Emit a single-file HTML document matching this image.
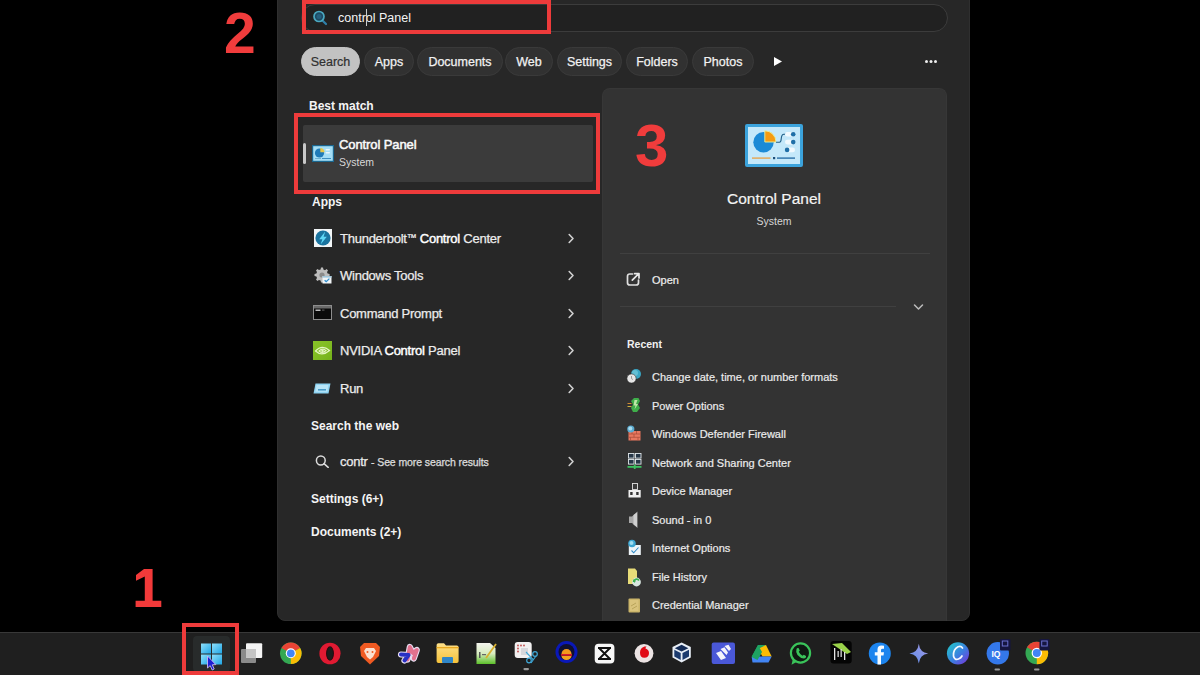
<!DOCTYPE html>
<html><head><meta charset="utf-8">
<style>
*{margin:0;padding:0;box-sizing:border-box}
html,body{width:1200px;height:675px;overflow:hidden;background:#000;font-family:"Liberation Sans",sans-serif;color:#f2f2f2}
.a{position:absolute}
.panel{position:absolute;left:277px;top:-12px;width:693px;height:633px;background:#272727;border-radius:8px;border:1px solid #2f2f2f}
.search{position:absolute;left:301px;top:4px;width:647px;height:28px;border-radius:14px;background:#212121;border:1px solid #3c3c3c}
.redbox{position:absolute;border:4px solid #ee3b3b}
.chip{position:absolute;top:47px;height:29px;border-radius:15px;background:#313131;border:1px solid #3a3a3a;font-size:12.5px;line-height:28px;text-align:center;color:#f2f2f2;-webkit-text-stroke:0.25px #f2f2f2}
.hdr{position:absolute;font-size:12px;font-weight:bold;color:#f4f4f4;white-space:nowrap}
.row{position:absolute;font-size:13px;color:#ececec;white-space:nowrap;letter-spacing:-0.25px;-webkit-text-stroke:0.25px #ececec}
.row b{font-weight:normal;-webkit-text-stroke:0.45px #fff;color:#fff}
.tm{font-size:10px;vertical-align:2px}
.chev{position:absolute;width:8px;height:11px}
.rp{position:absolute;left:602px;top:88px;width:345px;height:533px;background:#333333;border:1px solid #373737;border-bottom:none;border-radius:8px 8px 0 0}
.rec{position:absolute;left:652px;font-size:11px;color:#ebebeb;white-space:nowrap;-webkit-text-stroke:0.2px #ebebeb}
.num{position:absolute;font-weight:bold;color:#f03c3c;font-size:54px;line-height:1}
.tb{position:absolute;left:0;top:632px;width:1200px;height:43px;background:#1f1f1f;border-top:1px solid #383838}
.ti{position:absolute;top:643px;width:22px;height:22px}
</style></head>
<body>
<div class="panel"></div>
<div class="search"></div>
<!-- search icon -->
<svg class="a" style="left:311px;top:9px" width="18" height="18" viewBox="0 0 18 18"><line x1="11.2" y1="11.2" x2="15" y2="15" stroke="#2f7fa8" stroke-width="2.2" stroke-linecap="round"/><circle cx="8" cy="7.5" r="5" fill="#1d4a63" stroke="#4aa8c0" stroke-width="1.7"/><circle cx="8" cy="7.5" r="2.5" fill="#2a6a8a" opacity="0.7"/></svg>
<div class="a" style="left:338px;top:11px;font-size:12.5px;color:#f4f4f4;white-space:nowrap">control Panel</div>
<div class="a" style="left:366px;top:9px;width:1px;height:17px;background:#ccc"></div>
<div class="redbox" style="left:302px;top:0;width:249px;height:34px"></div>

<!-- chips -->
<div class="chip" style="left:301px;width:59px;background:#c2c2c2;border-color:#c2c2c2;color:#303030;-webkit-text-stroke:0.2px #303030">Search</div>
<div class="chip" style="left:364px;width:50px">Apps</div>
<div class="chip" style="left:417px;width:86px">Documents</div>
<div class="chip" style="left:505px;width:48px">Web</div>
<div class="chip" style="left:557px;width:65px">Settings</div>
<div class="chip" style="left:626px;width:62px">Folders</div>
<div class="chip" style="left:692px;width:62px">Photos</div>
<svg class="a" style="left:772px;top:56px" width="11" height="11" viewBox="0 0 11 11"><path d="M2 1 L10 5.5 L2 10 Z" fill="#fff"/></svg>
<svg class="a" style="left:920px;top:55px" width="22" height="12" viewBox="920 55 22 12"><circle cx="926.5" cy="61.5" r="1.5" fill="#eee"/><circle cx="931" cy="61.5" r="1.5" fill="#eee"/><circle cx="935.5" cy="61.5" r="1.5" fill="#eee"/></svg>

<!-- left column -->
<div class="hdr" style="left:309px;top:99px">Best match</div>
<div class="a" style="left:303px;top:125px;width:290px;height:57px;background:#3b3b3b;border-radius:2px"></div>
<div class="a" style="left:303px;top:143px;width:3px;height:21px;background:#c8c8c8;border-radius:2px"></div>
<div class="a" style="left:339px;top:136.5px;font-size:13px;color:#fafafa;white-space:nowrap;-webkit-text-stroke:0.5px #fafafa;letter-spacing:-0.1px">Control Panel</div>
<div class="a" style="left:339px;top:156px;font-size:10.5px;color:#d8d8d8;white-space:nowrap">System</div>
<div class="redbox" style="left:294px;top:113px;width:306px;height:81px"></div>

<div class="hdr" style="left:312px;top:195px">Apps</div>
<div class="row" style="left:340px;top:231px">Thunderbolt<span class="tm">™</span> <b>Control</b> Center</div>
<div class="row" style="left:340px;top:268px">Windows Tools</div>
<div class="row" style="left:340px;top:306px">Command Prompt</div>
<div class="row" style="left:340px;top:343px">NVIDIA <b>Control</b> Panel</div>
<div class="row" style="left:340px;top:381px">Run</div>
<svg class="chev" style="left:567px;top:233px" viewBox="0 0 8 11"><path d="M2.2 1.5 L6 5.5 L2.2 9.5" fill="none" stroke="#d0d0d0" stroke-width="1.6" stroke-linecap="round" stroke-linejoin="round"/></svg>
<svg class="chev" style="left:567px;top:270px" viewBox="0 0 8 11"><path d="M2.2 1.5 L6 5.5 L2.2 9.5" fill="none" stroke="#d0d0d0" stroke-width="1.6" stroke-linecap="round" stroke-linejoin="round"/></svg>
<svg class="chev" style="left:567px;top:308px" viewBox="0 0 8 11"><path d="M2.2 1.5 L6 5.5 L2.2 9.5" fill="none" stroke="#d0d0d0" stroke-width="1.6" stroke-linecap="round" stroke-linejoin="round"/></svg>
<svg class="chev" style="left:567px;top:345px" viewBox="0 0 8 11"><path d="M2.2 1.5 L6 5.5 L2.2 9.5" fill="none" stroke="#d0d0d0" stroke-width="1.6" stroke-linecap="round" stroke-linejoin="round"/></svg>
<svg class="chev" style="left:567px;top:383px" viewBox="0 0 8 11"><path d="M2.2 1.5 L6 5.5 L2.2 9.5" fill="none" stroke="#d0d0d0" stroke-width="1.6" stroke-linecap="round" stroke-linejoin="round"/></svg>

<div class="hdr" style="left:311px;top:418.5px">Search the web</div>
<div class="row" style="left:340px;top:454px">contr <span style="font-size:10.5px;color:#cfcfcf;letter-spacing:-0.1px">- See more search results</span></div>
<svg class="chev" style="left:567px;top:456px" viewBox="0 0 8 11"><path d="M2.2 1.5 L6 5.5 L2.2 9.5" fill="none" stroke="#d0d0d0" stroke-width="1.6" stroke-linecap="round" stroke-linejoin="round"/></svg>
<div class="hdr" style="left:311px;top:491.5px">Settings (6+)</div>
<div class="hdr" style="left:311px;top:525px">Documents (2+)</div>

<!-- right panel -->
<div class="rp"></div>
<div class="a" style="left:602px;top:190px;width:344px;text-align:center;font-size:15.5px;color:#f4f4f4;-webkit-text-stroke:0.2px #f4f4f4">Control Panel</div>
<div class="a" style="left:602px;top:215px;width:344px;text-align:center;font-size:10.5px;color:#d6d6d6">System</div>
<div class="a" style="left:620px;top:253px;width:310px;height:1px;background:#404040"></div>
<div class="a" style="left:652px;top:274px;font-size:11px;color:#eee;-webkit-text-stroke:0.2px #eee">Open</div>
<div class="a" style="left:620px;top:306px;width:276px;height:1px;background:#404040"></div>
<div class="a" style="left:627px;top:338px;font-size:10.5px;font-weight:bold;color:#f0f0f0">Recent</div>
<div class="rec" style="top:371px">Change date, time, or number formats</div>
<div class="rec" style="top:400px">Power Options</div>
<div class="rec" style="top:428px">Windows Defender Firewall</div>
<div class="rec" style="top:457px">Network and Sharing Center</div>
<div class="rec" style="top:485px">Device Manager</div>
<div class="rec" style="top:514px">Sound - in 0</div>
<div class="rec" style="top:542px">Internet Options</div>
<div class="rec" style="top:571px">File History</div>
<div class="rec" style="top:599px">Credential Manager</div>


<!-- left icons -->
<svg class="a" style="left:312px;top:145px" width="22" height="17" viewBox="0 0 22 17">
<rect x="0" y="0" width="22" height="17" fill="#1a6790"/>
<rect x="1.2" y="1.2" width="19.6" height="14.6" fill="#a4def6"/>
<circle cx="7.5" cy="8" r="4.6" fill="#1f7bb8"/>
<path d="M8.3 3 A4.6 4.6 0 0 1 12.6 7.2 L8.3 7.2Z" fill="#e6c84a"/>
<rect x="13.5" y="4" width="4.5" height="1.6" rx="0.8" fill="#e8f6fc"/>
<rect x="13.5" y="7" width="4.5" height="1.6" rx="0.8" fill="#e8f6fc"/>
<rect x="3" y="13" width="6" height="1" fill="#6cb0d0"/><rect x="10" y="13" width="9" height="1" fill="#3d8fc0"/>
</svg>
<svg class="a" style="left:314px;top:229px" width="18" height="18" viewBox="0 0 18 18">
<rect width="18" height="18" fill="#f2f6f8"/>
<circle cx="9" cy="9" r="7.6" fill="#1a74a0"/>
<path d="M11.2 2.6 L5.2 10.2 L8.4 10.2 L6.6 15.6 L12.8 7.8 L9.6 7.8 Z" fill="#5fd8f6"/>
</svg>
<svg class="a" style="left:314px;top:267px" width="18" height="17" viewBox="0 0 18 17">
<path d="M7 0.5 L9 0.5 L9.4 2.4 L11 3.2 L12.6 2 L14 3.4 L13 5 L13.6 6.6 L15.6 7 L15.6 9 L13.6 9.4 L13 11 L14 12.6 L12.6 14 L11 13 L9.4 13.6 L9 15.6 L7 15.6 L6.6 13.6 L5 13 L3.4 14 L2 12.6 L3 11 L2.4 9.4 L0.5 9 L0.5 7 L2.4 6.6 L3 5 L2 3.4 L3.4 2 L5 3 L6.6 2.4 Z" fill="#bdbdbd"/>
<circle cx="8" cy="8" r="2.6" fill="#8a8a8a"/>
<rect x="8.5" y="9" width="9" height="7.5" fill="#f0f4f6"/>
<rect x="8.5" y="9" width="9" height="1.6" fill="#9fc6dc"/>
<path d="M10.6 13.2 L12.2 14.6 L15.4 11.6" stroke="#2f8fd0" stroke-width="1.3" fill="none"/>
</svg>
<svg class="a" style="left:313px;top:305px" width="19" height="15" viewBox="0 0 19 15">
<rect x="0.5" y="0.5" width="18" height="14" fill="#0a0a0a" stroke="#8d8d8d" stroke-width="1"/>
<rect x="1" y="1" width="17" height="2.5" fill="#6a6a6a"/>
<rect x="2.5" y="4.5" width="5" height="1.5" fill="#bcbcbc"/>
<rect x="9" y="4.5" width="2.5" height="1.2" fill="#555"/>
</svg>
<svg class="a" style="left:313px;top:341px" width="19" height="19" viewBox="0 0 19 19">
<rect width="19" height="19" fill="#7fbc1e"/>
<rect width="19" height="19" fill="url(#nvg)"/>
<defs><linearGradient id="nvg" x1="0" y1="0" x2="1" y2="1"><stop offset="0" stop-color="#a6d64a" stop-opacity="0.2"/><stop offset="1" stop-color="#5f9e10" stop-opacity="0.4"/></linearGradient></defs>
<path d="M2.5 10 Q9 3 16.5 9.5 Q9 16 2.5 10Z" fill="none" stroke="#e4f5c2" stroke-width="1.2"/>
<path d="M6 10 Q9.5 6.5 13 9.5 Q9.5 13 6 10Z" fill="none" stroke="#e4f5c2" stroke-width="1.1"/>
<circle cx="9.5" cy="9.8" r="1.2" fill="#e4f5c2"/>
</svg>
<svg class="a" style="left:313px;top:383px" width="18" height="11" viewBox="0 0 18 11">
<path d="M2.5 0.5 L17.5 0.5 L15.5 10.5 L0.5 10.5 Z" fill="#8fd4f2"/>
<path d="M3.5 2 L15.5 2 L14.3 8.8 L2.3 8.8Z" fill="#b9e6f8"/>
<rect x="5" y="6" width="8" height="1.6" fill="#4a9cc8"/>
</svg>
<svg class="a" style="left:315px;top:455px" width="15" height="13" viewBox="0 0 15 13">
<circle cx="5.8" cy="5.5" r="4.4" fill="none" stroke="#dcdcdc" stroke-width="1.5"/>
<line x1="9" y1="8.7" x2="13.2" y2="12.3" stroke="#dcdcdc" stroke-width="1.6" stroke-linecap="round"/>
</svg>

<!-- right panel icons -->
<svg class="a" style="left:745px;top:124px" width="58" height="43" viewBox="0 0 58 43">
<rect x="0" y="0" width="58" height="43" rx="2" fill="#3ba3dc"/>
<rect x="3" y="3" width="52" height="37" fill="#c4e8fa"/>
<circle cx="18.5" cy="18.3" r="10.2" fill="#1b8ad6"/>
<path d="M19.8 6.8 A11.2 11.2 0 0 1 31 18 L19.8 18 Z" fill="#f59b12" stroke="#e4f2a0" stroke-width="0.9"/>
<path d="M31 18.2 L34.5 18.2 Q36 18.2 36.2 15 Q36.5 10.2 39 10.2 L41 10.2" fill="none" stroke="#1f5f88" stroke-width="1.1"/>
<rect x="40" y="8" width="10" height="4.6" rx="2.3" fill="#f1f9fe"/><circle cx="48.2" cy="10.3" r="2.3" fill="#1f6fa8"/>
<rect x="40" y="15.8" width="10" height="4.6" rx="2.3" fill="#f1f9fe"/><circle cx="48.2" cy="18.1" r="2.3" fill="#1f6fa8"/>
<rect x="40" y="23.6" width="10" height="4.6" rx="2.3" fill="#f1f9fe"/><circle cx="42.1" cy="25.9" r="2.3" fill="#1f6fa8"/>
<rect x="7" y="33.4" width="18.5" height="1.4" fill="#e5a550"/>
<rect x="28" y="33" width="2.2" height="2.2" fill="#1d4f7a"/>
<rect x="32" y="33.4" width="18" height="1.4" fill="#2a6fa8"/>
</svg>
<svg class="a" style="left:626px;top:272px" width="15" height="15" viewBox="0 0 15 15">
<path d="M6.5 2 L3.8 2 Q1.5 2 1.5 4.3 L1.5 10.7 Q1.5 13 3.8 13 L10.2 13 Q12.5 13 12.5 10.7 L12.5 8" fill="none" stroke="#e0e0e0" stroke-width="1.7" stroke-linecap="round"/>
<path d="M6.3 8.2 L12.8 1.7 M8.6 1.6 L13 1.6 L13 6" fill="none" stroke="#e8e8e8" stroke-width="1.7" stroke-linecap="round" stroke-linejoin="round"/>
</svg>
<svg class="a" style="left:913px;top:303px" width="11" height="8" viewBox="0 0 11 8">
<path d="M1.5 2 L5.5 6 L9.5 2" fill="none" stroke="#bdbdbd" stroke-width="1.5" stroke-linecap="round" stroke-linejoin="round"/>
</svg>


<svg class="a" style="left:620px;top:360px" width="30" height="260" viewBox="620 360 30 260">
<!-- change date -->
<circle cx="636" cy="374" r="5" fill="#3aa6c4"/><circle cx="635" cy="373" r="3" fill="#7fd0e0" opacity="0.6"/>
<circle cx="631.5" cy="378.5" r="4.6" fill="#e6e6e6" stroke="#2a2a2a" stroke-width="0.6"/>
<path d="M631.5 376 L631.5 378.6 L633 379.6" stroke="#8a8a8a" stroke-width="0.8" fill="none"/>
<!-- power -->
<path d="M634 398 L638.5 398 L640 401 L638 404.5 L640 408 L637 412 L633 412 L631 408 L633 404.5 L631 401 Z" fill="#3fae4a"/>
<path d="M634.5 400 L637.5 400 L636 404 L638 404 L634.5 409.5 L635.5 405.5 L633.5 405.5Z" fill="#bfe8a8"/>
<rect x="627.5" y="403" width="4" height="1" fill="#d08a30"/><rect x="627.5" y="406" width="4" height="1" fill="#d0b040"/>
<!-- firewall -->
<rect x="628.5" y="431" width="12" height="9.5" fill="#e87860"/>
<path d="M628.5 434 L640.5 434 M628.5 437.3 L640.5 437.3 M632 431 L632 434 M636.5 431 L636.5 434 M634 434 L634 437.3 M630.5 437.3 L630.5 440.5 M638 437.3 L638 440.5" stroke="#a84a38" stroke-width="0.7"/>
<circle cx="630.8" cy="429" r="3.6" fill="#5aaad0"/><circle cx="630.3" cy="428.5" r="2" fill="#a8dcef"/>
<!-- network -->
<rect x="628.5" y="453.5" width="5.5" height="4.6" fill="#263646" stroke="#dfe6ea" stroke-width="0.9"/>
<rect x="635.5" y="453.5" width="5.5" height="4.6" fill="#263646" stroke="#dfe6ea" stroke-width="0.9"/>
<rect x="628.5" y="459.5" width="5.5" height="4.6" fill="#263646" stroke="#dfe6ea" stroke-width="0.9"/>
<rect x="635.5" y="459.5" width="5.5" height="4.6" fill="#263646" stroke="#dfe6ea" stroke-width="0.9"/>
<rect x="627.5" y="466" width="14" height="1.8" fill="#3cc060"/><rect x="633.8" y="464.5" width="1.8" height="4.5" fill="#3cc060"/>
<!-- device manager -->
<rect x="632.5" y="483.5" width="5" height="6" fill="#3a3a3a" stroke="#e0e0e0" stroke-width="0.9"/>
<rect x="628.5" y="490" width="12.2" height="7.5" fill="#f0f0f0"/>
<rect x="630.2" y="492" width="2.4" height="3" fill="#333"/><rect x="636.2" y="492" width="2.4" height="3" fill="#333"/>
<!-- sound -->
<path d="M629 516.5 L632 516.5 L637.5 511.5 L637.5 528 L632 523 L629 523 Z" fill="#a8a8a8"/>
<path d="M633.5 515 L637 512.5 L637 527 L633.5 524.5Z" fill="#cfcfcf"/>
<!-- internet options -->
<rect x="628.8" y="545" width="12" height="10" fill="#eef4f8"/>
<path d="M631.5 550.5 L633.7 552.8 L638.5 547.5" stroke="#2f8ac8" stroke-width="1.1" fill="none"/>
<circle cx="632" cy="543.5" r="3.8" fill="#3ea6d2"/><circle cx="631.5" cy="543" r="2" fill="#9fdcf0"/>
<!-- file history -->
<path d="M628 568.5 L635 568.5 L637 571 L637 584 L628 584 Z" fill="#e8dc78"/>
<circle cx="636.5" cy="582" r="4.4" fill="#d8e6e0"/>
<path d="M633.5 582 A3 3 0 0 1 639 580.5" stroke="#3cb050" stroke-width="1.6" fill="none"/>
<path d="M632.8 579.5 L634.5 583 L636 580.5Z" fill="#3cb050"/>
<!-- credential -->
<rect x="628.5" y="598.5" width="11.5" height="14" rx="1" fill="#cbb56a"/>
<rect x="630" y="600" width="8.5" height="11" fill="#d9c37c"/>
<path d="M631 606 L636 603 M632 609 L637 606" stroke="#b09a50" stroke-width="0.8"/>
</svg>

<!-- numbers -->
<div class="num" style="left:224px;top:5px;font-size:57px">2</div>
<div class="num" style="left:635px;top:116px;font-size:60px">3</div>
<svg class="a" style="left:0;top:0" width="200" height="620" viewBox="0 0 200 620"><path d="M144 569 L152.6 569 L152.6 600.8 L161.3 600.8 L161.3 607 L135.6 607 L135.6 600.8 L144.8 600.8 L144.8 576.4 L136 580.8 L136 575 Z" fill="#f23a3a"/></svg>

<!-- taskbar -->
<div class="tb"></div>
<div class="a" style="left:193px;top:636px;width:37px;height:36px;background:#282b2b;border-radius:4px"></div>

<svg class="a" style="left:0;top:632px" width="1200" height="43" viewBox="0 632 1200 43">
<defs>
<linearGradient id="wg" x1="0" y1="0" x2="1" y2="1"><stop offset="0" stop-color="#8fe0fb"/><stop offset="1" stop-color="#1fa6e6"/></linearGradient>
<linearGradient id="cg" x1="0" y1="0" x2="1" y2="1"><stop offset="0" stop-color="#1fd0c8"/><stop offset="0.55" stop-color="#3b7ee0"/><stop offset="1" stop-color="#7b2fd8"/></linearGradient>
<linearGradient id="fg" x1="0" y1="0" x2="0" y2="1"><stop offset="0" stop-color="#fde08a"/><stop offset="1" stop-color="#f5c23a"/></linearGradient>
<linearGradient id="ng" x1="0" y1="0" x2="0" y2="1"><stop offset="0" stop-color="#f4f4ee"/><stop offset="0.5" stop-color="#d8ecc0"/><stop offset="1" stop-color="#5cc02a"/></linearGradient>
<linearGradient id="gm" x1="0" y1="1" x2="1" y2="0"><stop offset="0" stop-color="#5a8be8"/><stop offset="1" stop-color="#a59ae6"/></linearGradient>
</defs>
<!-- start -->
<rect x="201" y="643.5" width="10" height="10" fill="url(#wg)"/>
<rect x="212" y="643.5" width="10" height="10" fill="url(#wg)"/>
<rect x="201" y="654.5" width="10" height="10" fill="url(#wg)"/>
<rect x="212" y="654.5" width="10" height="10" fill="url(#wg)"/>
<path d="M207.5 656 L207.5 668 L210.2 665.6 L212.2 670 L214.2 669 L212.3 664.8 L215.8 664.6 Z" fill="#1e1ed2" stroke="#c8b8f0" stroke-width="0.9"/>
<!-- task view -->
<rect x="241" y="649" width="15" height="14" rx="1" fill="#8a8a8a"/>
<rect x="246" y="643.3" width="16.2" height="14.6" rx="1" fill="#f4f4f4"/>
<rect x="246" y="649" width="10" height="8.9" fill="#c4c4c4"/>
<!-- chrome -->
<g transform="translate(290.8 653.3)">
<circle r="10.8" fill="#34a853"/>
<path d="M0 0 L-9.35 -5.4 A10.8 10.8 0 0 1 9.35 -5.4 Z" fill="#ea4335"/>
<path d="M0 0 L9.35 -5.4 A10.8 10.8 0 0 1 0 10.8 Z" fill="#fbbc04"/>
<circle r="5" fill="#fff"/><circle r="3.9" fill="#4285f4"/>
</g>
<!-- opera -->
<g transform="translate(330 653.5)">
<ellipse rx="10.6" ry="10.8" fill="#e01a32"/>
<ellipse rx="4" ry="7.2" fill="#2a0a0e"/>
<ellipse rx="3" ry="6.5" fill="#1c1c1c"/>
</g>
<!-- brave -->
<path d="M364 643 L376 643 L380 647 L379 656 L370 664.5 L361 656 L360 647 Z" fill="#f05a22"/>
<path d="M366 648 L374 648 L376 651 L373 657 L370 659.5 L367 657 L364 651 Z" fill="#fbe0d0"/>
<circle cx="367.5" cy="652" r="1" fill="#f05a22"/><circle cx="372.5" cy="652" r="1" fill="#f05a22"/>
<!-- star app -->
<path d="M401 654.5 L408.5 655 L404.5 660.5" fill="none" stroke="#e8e0f4" stroke-width="6.2" stroke-linecap="round" stroke-linejoin="round"/>
<path d="M407.5 659.5 L409.8 647 L413 653 L416.8 650 L413.8 658.5" fill="none" stroke="#e8e0f4" stroke-width="6.2" stroke-linecap="round" stroke-linejoin="round"/>
<path d="M407.5 659.5 L409.8 647 L413 653 L416.8 650 L413.8 658.5" fill="none" stroke="#e2718e" stroke-width="4" stroke-linecap="round" stroke-linejoin="round"/>
<path d="M401 654.5 L408.5 655 L404.5 660.5" fill="none" stroke="#2830c4" stroke-width="4" stroke-linecap="round" stroke-linejoin="round"/>
<!-- folder -->
<path d="M436.6 645 Q436.6 643.2 438.4 643.2 L444 643.2 L446 645.5 L456.8 645.5 Q458.6 645.5 458.6 647.3 L458.6 661.2 Q458.6 663 456.8 663 L438.4 663 Q436.6 663 436.6 661.2 Z" fill="url(#fg)"/>
<rect x="436.6" y="647" width="22" height="1.3" fill="#e9a820"/>
<rect x="442" y="657" width="11" height="6" rx="1" fill="#2f86c8"/>
<!-- notepad -->
<path d="M476.5 643 L490 643 L495.5 648 L495.5 664 L476.5 664 Z" fill="url(#ng)"/>
<rect x="479" y="652" width="1.5" height="6" fill="#555"/><rect x="482" y="654" width="4" height="1.2" fill="#666"/>
<path d="M486 658 L496 644" stroke="#d8b030" stroke-width="1.8"/>
<!-- snipping -->
<rect x="514.7" y="642" width="17" height="16" rx="3" fill="#f2f0f0"/>
<circle cx="518" cy="645.5" r="0.9" fill="#c04a4a"/><circle cx="521" cy="645.5" r="0.9" fill="#c04a4a"/><circle cx="524" cy="645.5" r="0.9" fill="#c04a4a"/>
<circle cx="518" cy="648.5" r="0.9" fill="#c04a4a"/><circle cx="518" cy="651.5" r="0.9" fill="#c04a4a"/>
<rect x="521" y="648" width="7" height="7" fill="#d8d8dc"/>
<circle cx="529" cy="660.5" r="2.3" fill="none" stroke="#3fa8d8" stroke-width="1.2"/>
<circle cx="535" cy="654" r="2.3" fill="none" stroke="#3fa8d8" stroke-width="1.2"/>
<path d="M526 652 L533.5 660 M531 663 L536 656" stroke="#3fa8d8" stroke-width="1.1"/>
<rect x="523.4" y="668" width="5.6" height="2.2" rx="1.1" fill="#9a9a9a"/>
<!-- blue ring -->
<circle cx="566.5" cy="652" r="11" fill="#0a18b8"/>
<circle cx="566.5" cy="652" r="8" fill="#101030"/>
<path d="M561.5 654 A5 5 0 0 1 571.5 654 Z" fill="#f39a1c"/>
<rect x="561" y="654" width="11" height="1.8" fill="#d6202a"/>
<path d="M561.5 656 L571.5 656 A5 4 0 0 1 561.5 656Z" fill="#f2a41e"/>
<!-- capcut -->
<rect x="594.7" y="643.7" width="19.7" height="19.8" rx="4" fill="#f7f7f7"/>
<path d="M598 648 L611 648 M598 659 L611 659 M599 648 L610 659 M610 648 L599 659" stroke="#111" stroke-width="1.9" fill="none"/>
<!-- vodafone -->
<circle cx="644" cy="653.3" r="9.4" fill="#ece4e4"/>
<path d="M644.5 646.5 Q640 648 640 652.5 Q640 657.8 644.3 657.8 Q649 657.8 649 653 Q649 649.5 645.5 648.5 Q645.6 647.3 646.6 646.6 Z" fill="#e10a16"/>
<!-- virtualbox -->
<path d="M681.6 642.5 L690.8 647 L690.8 657.5 L681.6 662.5 L672.5 657.5 L672.5 647 Z" fill="#e8eef6"/>
<path d="M681.6 644.8 L688.4 648.2 L681.6 651.6 L674.8 648.2 Z" fill="#142c58"/>
<path d="M674.3 649.8 L680.7 653 L680.7 660 L674.3 656.6 Z" fill="#1b3a6e"/>
<path d="M682.5 653 L689 649.8 L689 656.6 L682.5 660 Z" fill="#1b3a6e"/>
<!-- linear-like -->
<rect x="711.7" y="642.5" width="23.3" height="21.5" rx="2" fill="#4a58d8"/>
<path d="M716 653 L721 651 L726 658 L721 660 Z M720.5 649 L724.5 647.3 L728 652.5 L726.5 655 Z M724.5 646 L728.5 644.8 L731 649 L729 651 Z" fill="#f4f4fb"/>
<!-- drive -->
<path d="M757.5 645 L766 645 L771.7 655.5 L767.5 662.5 Z" fill="#fbbc04" opacity="0"/>
<path d="M757.8 645 L765.6 645 L761.7 651.8 L757.8 658 L753.9 651.8 Z" fill="#0f9d58" opacity="0"/>
<path d="M758 645 L766 645 L762 652 L757 660.5 L751.7 656.5 Z" fill="#1ea362"/>
<path d="M766 645 L771.7 656.5 L762.5 656.5 L758 649 Z" fill="#fbbc04"/>
<path d="M755.3 656.5 L771.7 656.5 L768.5 662.5 L752.5 662.5 L751.7 657 Z" fill="#4285f4"/>
<path d="M758 645 L762 652 L757.5 660 L751.7 657 L758 645Z" fill="#1ea362"/>
<!-- whatsapp -->
<circle cx="800.5" cy="653" r="9.6" fill="#0f1a12" stroke="#3ac45a" stroke-width="2.2"/>
<path d="M791.5 664.8 L793 658.5 L796.5 662 Z" fill="#3ac45a"/>
<path d="M796.5 649 Q797 647.5 798.5 648 L799.8 650.5 L798.8 651.8 Q800 654.5 802.5 655.8 L803.8 654.7 L806 656 Q806.5 657.5 805 658.3 Q801 659 797.5 655 Q795.5 651.5 796.5 649Z" fill="#3ac45a"/>
<!-- black green app -->
<rect x="830.5" y="641" width="21.2" height="22.5" rx="3" fill="#050505"/>
<path d="M832 644 L842 643 L851 652 L847 654 Z" fill="#9ad24a"/>
<rect x="834" y="648" width="1.3" height="12" fill="#e4e4e4"/><rect x="837.5" y="651" width="1.3" height="6" fill="#d8d8d8"/>
<rect x="840.5" y="649" width="1.3" height="8" fill="#d8d8d8"/><rect x="844" y="652" width="1.3" height="8" fill="#e4e4e4"/>
<!-- facebook -->
<circle cx="879.8" cy="653.4" r="11" fill="#1c84ee"/>
<path d="M877.5 664.4 L877.5 655.5 L874.8 655.5 L874.8 652.2 L877.5 652.2 L877.5 649.6 Q877.5 645.6 881.5 645.6 L884 645.8 L884 648.8 L882.4 648.8 Q881 648.8 881 650.2 L881 652.2 L884 652.2 L883.5 655.5 L881 655.5 L881 664.4 Z" fill="#f6fbff"/>
<!-- gemini -->
<path d="M918.8 643.8 Q919.8 652.5 928.2 653.6 Q919.8 654.7 918.8 663.5 Q917.8 654.7 909.4 653.6 Q917.8 652.5 918.8 643.8Z" fill="url(#gm)"/>
<!-- canva -->
<circle cx="958" cy="653.3" r="11.1" fill="url(#cg)"/>
<path d="M962.5 648 Q961 645.5 958 646.8 Q953 649.5 953.5 656 Q954.5 660.5 958.5 659 Q961 658 962 656" fill="none" stroke="#f6f8ff" stroke-width="1.7" stroke-linecap="round"/>
<!-- IQ -->
<circle cx="997.8" cy="653.3" r="11.2" fill="#3478ea"/>
<text x="991.5" y="657" font-family="Liberation Sans" font-weight="bold" font-size="8.5" fill="#fff">IQ</text>
<rect x="1000" y="639" width="10.5" height="11.5" rx="1" fill="#161640"/>
<rect x="1002.3" y="641" width="5.5" height="5" fill="none" stroke="#6a70d0" stroke-width="1"/>
<rect x="994.5" y="668.5" width="5.5" height="2" rx="1" fill="#9a9a9a"/>
<!-- chrome 2 -->
<g transform="translate(1036.8 653)">
<circle r="11.3" fill="#34a853"/>
<path d="M0 0 L-9.8 -5.65 A11.3 11.3 0 0 1 9.8 -5.65 Z" fill="#ea4335"/>
<path d="M0 0 L9.8 -5.65 A11.3 11.3 0 0 1 0 11.3 Z" fill="#fbbc04"/>
<circle r="5.2" fill="#fff"/><circle r="4" fill="#4285f4"/>
</g>
<rect x="1039.5" y="639" width="10" height="11.5" rx="1" fill="#161640"/>
<rect x="1041.7" y="641" width="5.5" height="5" fill="none" stroke="#6a70d0" stroke-width="1"/>
<rect x="1034" y="668.5" width="5.5" height="2" rx="1" fill="#9a9a9a"/>
</svg>

<div class="redbox" style="left:182px;top:623px;width:57px;height:52px"></div>
</body></html>
